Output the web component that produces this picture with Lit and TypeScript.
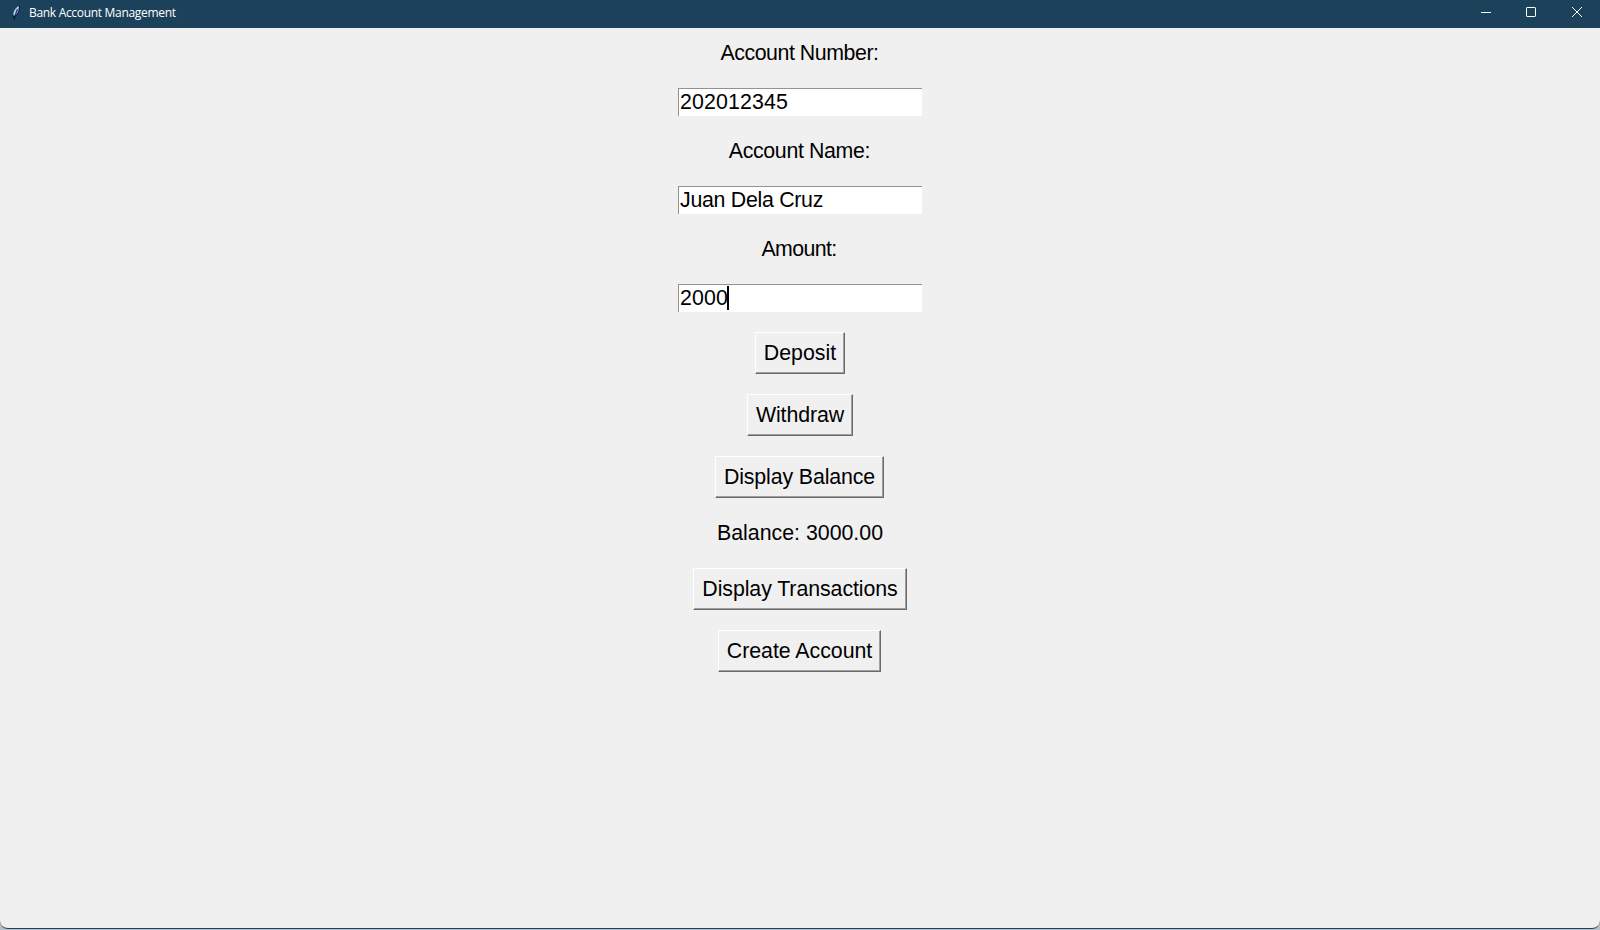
import { LitElement, html, css, svg } from "lit";
import { customElement } from "lit/decorators.js";
import { styleMap } from "lit/directives/style-map.js";

interface Row {
  kind: "label" | "entry" | "button";
  text: string;
  spacing?: number;
  width?: number;
  shift?: number;
  caret?: boolean;
}

const ROWS: Row[] = [
  { kind: "label", text: "Account Number:", spacing: -0.45, shift: 1 },
  { kind: "entry", text: "202012345", spacing: 0.13 },
  { kind: "label", text: "Account Name:", spacing: -0.35, shift: 1 },
  { kind: "entry", text: "Juan Dela Cruz", spacing: -0.28 },
  { kind: "label", text: "Amount:", spacing: -0.6, shift: 2 },
  { kind: "entry", text: "2000", spacing: 0.13, caret: true },
  { kind: "button", text: "Deposit", spacing: 0, width: 90 },
  { kind: "button", text: "Withdraw", spacing: -0.08, width: 106 },
  { kind: "button", text: "Display Balance", spacing: -0.12, width: 169, shift: 1 },
  { kind: "label", text: "Balance: 3000.00", spacing: 0 },
  { kind: "button", text: "Display Transactions", spacing: -0.07, width: 214 },
  { kind: "button", text: "Create Account", spacing: -0.03, width: 163, shift: 1 },
];

@customElement("app-root")
export class AppRoot extends LitElement {
  static styles = css`
    :host {
      display: block;
      height: 930px;
      background: linear-gradient(#1c415b 50%, #b4c0ca 50%);
      overflow: hidden;
      font-family: "Liberation Sans", Arial, sans-serif;
    }
    .window {
      box-sizing: border-box;
      height: 929px;
      display: flex;
      flex-direction: column;
      background: #f0f0f0;
      border-bottom: 1px solid #1f405a;
      border-radius: 0 0 8px 8px;
      overflow: hidden;
    }
    .bar {
      flex: none;
      height: 28px;
      display: flex;
      align-items: center;
      background: #1c415b;
      color: #fff;
    }
    .feather {
      margin: 0 0 4px 10px;
      width: 12px;
      height: 17px;
    }
    .title {
      margin: 0 auto 2px 7px;
      font: 12px/16px "Open Sans", "Noto Sans", sans-serif;
      letter-spacing: -0.31px;
    }
    .controls {
      display: flex;
      gap: 34px;
      padding: 0 17px 4px 0;
    }
    .controls svg {
      display: block;
    }
    .form {
      display: flex;
      flex-direction: column;
      align-items: center;
      padding-top: 10px;
      gap: 20px;
      font-size: 21.33px;
      line-height: 24px;
      color: #000;
      white-space: pre;
    }
    .label {
      height: 30px;
      line-height: 30px;
    }
    .entry {
      box-sizing: border-box;
      width: 244px;
      height: 28px;
      display: flex;
      background: #fff;
      border-top: 1px solid #929292;
      border-left: 1px solid #929292;
      padding: 1px 0 0 1px;
    }
    .caret {
      width: 2px;
      height: 24px;
      margin-left: -1px;
      background: #000;
    }
    .button {
      box-sizing: border-box;
      height: 42px;
      display: flex;
      justify-content: center;
      align-items: center;
      border: 1px solid #fff;
      border-right-color: #696969;
      border-bottom-color: #696969;
      box-shadow: inset -1px -1px #a0a0a0;
      padding: 0;
    }
  `;

  private renderRow(row: Row) {
    const spacing = styleMap({ letterSpacing: `${row.spacing ?? 0}px` });
    const marginRight = `${row.shift ?? 0}px`;
    if (row.kind === "entry") {
      return html`<div class="entry">
        <span style=${spacing}>${row.text}</span>${row.caret ? html`<i class="caret"></i>` : null}
      </div>`;
    }
    if (row.kind === "button") {
      return html`<div class="button" role="button" style=${styleMap({ width: `${row.width}px`, marginRight })}><span style=${spacing}>${row.text}</span></div>`;
    }
    return html`<div class="label" style=${styleMap({ marginRight })}><span style=${spacing}>${row.text}</span></div>`;
  }

  private control(shape: unknown) {
    return html`<svg width="12" height="12" viewBox="0 0 12 12" fill="none" stroke="#fff">${shape}</svg>`;
  }

  render() {
    return html`
      <div class="window">
        <div class="bar">
          <svg class="feather" viewBox="0 0 12 17">
            <path d="M3.8 14.5C1.6 10 3.2 4.5 9.5 1c1 4-.6 9-4.5 11.500L4.500 16z" fill="#0c1420" />
            <path d="M3.400 11.500C2.600 7.500 5 3.600 9 1.800 9.400 6 8 9.500 4.600 12z" fill="#6f9ee0" />
            <path d="M8.200 3Q4.800 6.500 4 10.500" fill="none" stroke="#e4eeff" stroke-width="1" />
            <path d="M7.300 5Q5.600 9 4.300 15.500" fill="none" stroke="#101a2c" stroke-width=".8" />
          </svg>
          <span class="title">Bank Account Management</span>
          <div class="controls">
            ${this.control(svg`<path d="M2 6.500H12" />`)}
            ${this.control(svg`<rect x="1.500" y="1.500" width="9" height="9" rx=".6" />`)}
            ${this.control(svg`<path d="M1 1 11 11M11 1 1 11" />`)}
          </div>
        </div>
        <div class="form">${ROWS.map((r) => this.renderRow(r))}</div>
      </div>
    `;
  }
}
